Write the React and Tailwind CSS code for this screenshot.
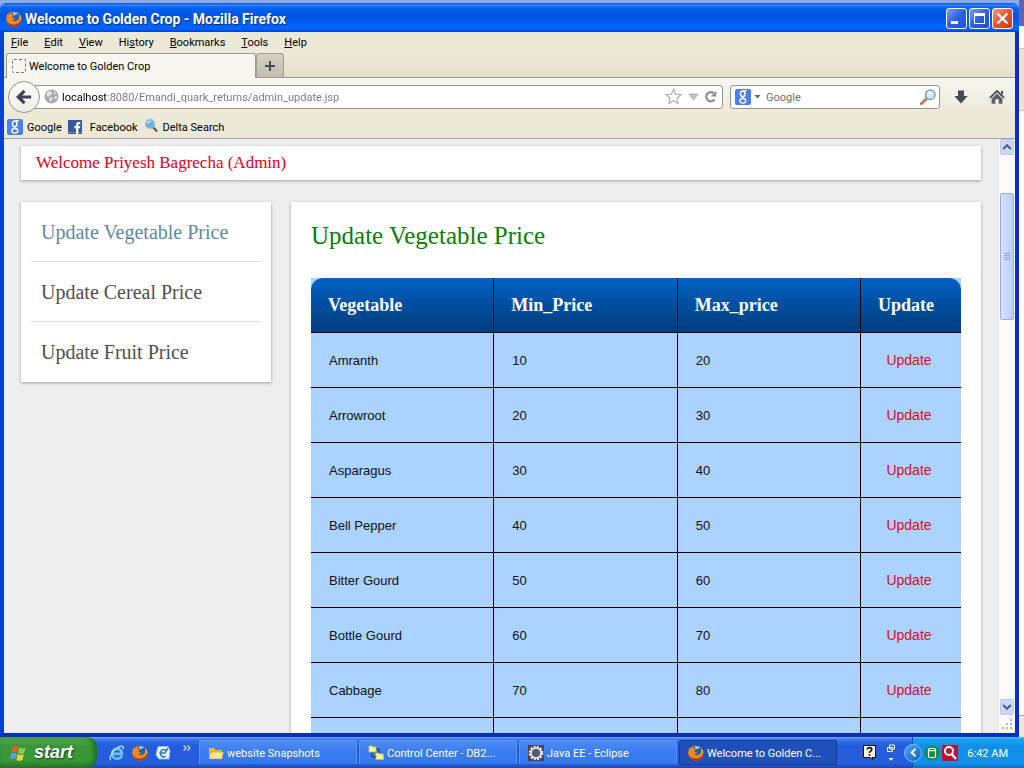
import React from "react";

const menus = [
  ["", "F", "ile"],
  ["", "E", "dit"],
  ["", "V", "iew"],
  ["Hi", "s", "tory"],
  ["", "B", "ookmarks"],
  ["", "T", "ools"],
  ["", "H", "elp"],
];

const rows = [
  ["Amranth", 10, 20],
  ["Arrowroot", 20, 30],
  ["Asparagus", 30, 40],
  ["Bell Pepper", 40, 50],
  ["Bitter Gourd", 50, 60],
  ["Bottle Gourd", 60, 70],
  ["Cabbage", 70, 80],
];

function FirefoxIcon() {
  return (
    <svg className="size-4 shrink-0" viewBox="0 0 16 16" aria-hidden="true">
      <circle cx="8" cy="8" r="7.6" fill="#d9540b" />
      <circle cx="8.6" cy="6" r="5.2" fill="#2460ae" />
      <path d="M6.500 1.800c2-1 5-.4 6.300 1.500-1.300-.4-2.600-.3-3.300.5s-2 .2-3-2z" fill="#9fd2f5" />
      <path d="M1.200 2.600c.4.700.9 1 1.500 1.100C3.300 2.500 4.300 1.600 5.500 1.100c-.3.800-.2 1.500.2 2.200.7.500 1.800.6 2.500.8-.1.900-1.200 1.200-1.700 1.700.2.500.1.900-.1 1.300.9-.1 2 .3 2.700.3-.5 1.300-2 1.500-2.900 1.200 1 2 4 2.200 5.700.5 1.300-1.300 1.500-3.200.9-5 1.400 1.200 2.300 3.100 2.100 5C14.600 13 11.700 15.600 8 15.600 3.900 15.600.4 12.400.4 8.200c0-1.800.3-3.500.8-5.600z" fill="#f08a1d" />
      <path d="M.7 9.500C2.200 12.500 5 13.700 8 13.600c3.300-.1 5.700-1.800 6.800-4.600.3 3.700-2.800 6.700-6.800 6.700-3.500 0-6.700-2.600-7.300-6.200z" fill="#b93208" />
      <path d="M13.400 3.200c1.300 1.600 1.900 3.600 1.300 5.600-.7-1.100-.9-3.300-1.300-5.600z" fill="#ffd34a" />
    </svg>
  );
}

function GoogleIcon() {
  return (
    <span aria-hidden="true" className="flex size-4 shrink-0 items-center justify-center rounded-[2px] bg-[#4a80ee]">
      <svg className="size-4" viewBox="0 0 16 16" fill="none" stroke="#fff">
        <ellipse cx="7.700" cy="4.800" rx="2.300" ry="2.900" strokeWidth="1.500" />
        <path d="M8.500 1.600h3.300M8.500 7.600c-1.500 1 .1 1.500 1.300 2.300" strokeWidth="1.200" />
        <ellipse cx="7.800" cy="11.800" rx="3" ry="2.300" strokeWidth="1.400" />
      </svg>
    </span>
  );
}

function Magnifier() {
  return (
    <svg className="size-4 shrink-0" viewBox="0 0 16 16" aria-hidden="true">
      <path d="M1.500 14.500 6.800 9.200" stroke="#b7703f" strokeWidth="3" strokeLinecap="round" />
      <path d="M1.200 14 6.300 8.900" stroke="#e9b48c" strokeWidth="1" />
      <circle cx="10.300" cy="5.700" r="4.700" fill="#cfe9fb" stroke="#7d9cc4" strokeWidth="1.500" />
      <path d="M7.600 5.200a3 3 0 0 1 2.700-2.300" stroke="#fff" strokeWidth="1.300" fill="none" />
    </svg>
  );
}

function Chevron({ down }) {
  return (
    <svg className="h-[8px] w-[10px]" viewBox="0 0 10 8" aria-hidden="true">
      <path d={down ? "M1.200 2 5 5.800 8.800 2" : "M1.200 6 5 2.200 8.800 6"} fill="none" stroke="#4d6185" strokeWidth="2.200" />
    </svg>
  );
}

function TitleBar() {
  return (
    <header className="flex h-[29px] shrink-0 items-center rounded-t-md bg-[linear-gradient(#0a50c8_0%,#2f86ff_7%,#0662f0_16%,#0053e0_45%,#0064fc_78%,#0060f4_92%,#0040c4_100%)] px-1.5 pt-[2px]">
      <FirefoxIcon />
      <h1 className="ml-[3px] flex-1 truncate pt-px font-[Roboto,sans-serif] text-[14px] font-bold leading-5 text-white [text-shadow:1px_1px_1px_#0a2a80]">
        Welcome to Golden Crop - Mozilla Firefox
      </h1>
      <div className="flex gap-[2px]">
        <button aria-label="Minimize" className="flex size-[21px] items-center justify-center rounded-[3px] border border-white bg-linear-to-br from-[#7d9cf0] via-[#2f60e0] to-[#1c50d8]">
          <svg className="size-[19px]" viewBox="0 0 19 19"><path d="M4 12h7v3H4z" fill="#fff" /></svg>
        </button>
        <button aria-label="Maximize" className="flex size-[21px] items-center justify-center rounded-[3px] border border-white bg-linear-to-br from-[#7d9cf0] via-[#2f60e0] to-[#1c50d8]">
          <svg className="size-[19px]" viewBox="0 0 19 19"><path d="M4 4h11v11H4zM5 7v7h9V7z" fill="#fff" fillRule="evenodd" /></svg>
        </button>
        <button aria-label="Close" className="flex size-[21px] items-center justify-center rounded-[3px] border border-white bg-linear-to-br from-[#f09a80] via-[#e25530] to-[#c83a12]">
          <svg className="size-[19px]" viewBox="0 0 19 19"><path d="m4.500 4.500 10 10m0-10-10 10" stroke="#fff" strokeWidth="2.200" /></svg>
        </button>
      </div>
    </header>
  );
}

function BrowserChrome() {
  return (
    <div className="shrink-0 bg-[#ece9d8] font-[Roboto,sans-serif] text-[11px] text-black">
      <nav aria-label="Menu" className="flex h-[21px] items-center gap-4 pl-[7px] pt-[2px]">
        {menus.map(([before, key, after]) => (
          <button key={before + key + after}>
            {before}<span className="underline">{key}</span>{after}
          </button>
        ))}
      </nav>
      <div className="flex h-[25px] items-stretch border-b border-[#9c9a8e] bg-linear-to-b from-[#ece9d8] to-[#e4e0ca] pl-[2px]">
        <button className="-mb-px flex w-[250px] items-center gap-[3px] rounded-t-[3px] border border-b-0 border-[#9c9a8e] bg-[#f7f6f0] pl-[5px]">
          <span className="size-[14px] rounded-[2px] border border-dashed border-[#77756c]" />
          <span className="pt-[3px]">Welcome to Golden Crop</span>
        </button>
        <button aria-label="New tab" className="flex w-[28px] items-center justify-center rounded-t-[3px] border border-b-0 border-[#a19f91] bg-linear-to-b from-[#d3d0c2] to-[#c1beae]">
          <svg className="size-3" viewBox="0 0 12 12"><path d="M1 6h10M6 1v10" stroke="#454c55" strokeWidth="2" /></svg>
        </button>
      </div>
      <div className="flex h-[37px] items-center bg-linear-to-b from-[#f7f6f0] to-[#ece9d8] pl-1 pr-[10px]">
        <button aria-label="Back" className="z-10 flex size-8 shrink-0 items-center justify-center rounded-full border border-[#98968c] bg-linear-to-b from-white to-[#eeece2]">
          <svg className="size-4" viewBox="0 0 18 18"><path d="M9.500 2 2.500 9l7 7M3 9h14" fill="none" stroke="#3c444f" strokeWidth="3.600" /></svg>
        </button>
        <div className="-ml-2 flex h-6 flex-1 items-center rounded-r-[3px] border border-[#98968c] bg-white pl-[11px] pr-[5px]">
          <svg className="size-[15px] shrink-0" viewBox="0 0 15 15" aria-hidden="true">
            <circle cx="7.500" cy="7.500" r="7" fill="#a9a9a9" />
            <path d="M2.500 4.500c1-2 3-3 4.500-2.800l-.3 1.600 1.800.8-1 2-2.300.2-.8 1.500-1.500-.8zM9.500 2l3 2.300-1.800 1.200zM5.500 8l3 .8.5 1.500-1.800 1-.4 2-1.400-1.600zM10.500 7l2.700.4-1 3-1.800-1z" fill="#e6e6e6" />
          </svg>
          <input
            aria-label="Address"
            defaultValue="localhost:8080/Emandi_quark_returns/admin_update.jsp"
            className="ml-[3px] min-w-0 flex-1 bg-[linear-gradient(90deg,#000_44px,#777_44px)] bg-clip-text pt-[3px] text-transparent outline-none"
          />
          <button aria-label="Bookmark this page">
            <svg className="size-[17px]" viewBox="0 0 17 17"><path d="m8.500 1.200 2.100 5 5.400.5-4.100 3.500 1.200 5.300-4.600-2.800-4.600 2.800 1.200-5.300L1 6.700l5.400-.5z" fill="#fff" stroke="#b0b0b0" strokeWidth="1.200" /></svg>
          </button>
          <button aria-label="Show history" className="ml-[6px]">
            <svg className="h-[8px] w-[11px]" viewBox="0 0 11 8"><path d="M.8 1h9.400L5.500 7.200z" fill="#c4c4c4" stroke="#aaa" strokeWidth=".8" /></svg>
          </button>
          <button aria-label="Reload" className="ml-[5px]">
            <svg className="size-[13px]" viewBox="0 0 13 13"><path d="M10.500 9.500A4.600 4.600 0 1 1 9.800 3.200" fill="none" stroke="#8a8d91" strokeWidth="2.200" /><path d="M12.300.8v5.700H6.800z" fill="#8a8d91" /></svg>
          </button>
        </div>
        <div className="ml-[7px] flex h-6 w-[210px] items-center rounded-[3px] border border-[#98968c] bg-white pl-1 pr-[3px]">
          <GoogleIcon />
          <button aria-label="Choose search engine" className="ml-[3px]">
            <svg className="h-1 w-[7px]" viewBox="0 0 7 4"><path d="M.5 0h6l-3 3.600z" fill="#666" /></svg>
          </button>
          <input aria-label="Search" placeholder="Google" className="ml-[5px] min-w-0 flex-1 pt-[3px] outline-none placeholder:text-[#6f6f6f]" />
          <button aria-label="Go"><Magnifier /></button>
        </div>
        <button aria-label="Downloads" className="ml-[14px]">
          <svg className="size-[14px]" viewBox="0 0 14 14"><path d="M4 .5h6V6h3.700L7 13.500.3 6H4z" fill="#434b55" /></svg>
        </button>
        <button aria-label="Home" className="ml-[21px]">
          <svg className="size-4" viewBox="0 0 16 16"><path d="m8 .8 7.700 7.500-1.200 1.200L8 3.200 1.500 9.500.3 8.300zM12 2h2v4l-2-2z" fill="#434b55" /><path d="m8 4.500 5.400 5.200v5.100H9.700v-4.600H6.300v4.600H2.600V9.700z" fill="#59616a" /></svg>
        </button>
      </div>
      <nav aria-label="Bookmarks" className="flex h-6 items-center border-b border-[#a5a397] pl-[3px]">
        <a href="#google" className="flex items-center gap-1"><GoogleIcon /><span className="pt-[3px]">Google</span></a>
        <a href="#facebook" className="ml-[6px] flex items-center gap-2">
          <svg className="size-[14px]" viewBox="0 0 14 14" aria-hidden="true"><path d="M0 0h14v14H0z" fill="#3b5998" /><path d="M0 12h14v1H0z" fill="#7188b7" /><path d="M8 14V8.200H6.400V6H8V4.700C8 2.900 9 2 10.700 2h1.600v2.200h-1c-.8 0-1 .3-1 1V6h2l-.3 2.200h-1.700V14z" fill="#fff" /></svg>
          <span className="pt-[3px]">Facebook</span>
        </a>
        <a href="#delta" className="ml-[6px] flex items-center gap-[3px]">
          <svg className="size-4" viewBox="0 0 16 16" aria-hidden="true"><path d="m9 8 4 4.500" stroke="#6c5a4c" strokeWidth="2.400" /><circle cx="6" cy="5" r="4.500" fill="#65b4f2" stroke="#a9bccd" strokeWidth="1.200" /><path d="M3.500 4.500A3 3 0 0 1 7 2.500" stroke="#d8f0ff" strokeWidth="1.300" fill="none" /></svg>
          <span className="pt-[3px]">Delta Search</span>
        </a>
      </nav>
    </div>
  );
}

function SideLink({ href, active, last, children }) {
  return (
    <li className={last ? "" : "border-b border-[#dedede]"}>
      <a href={href} className={"flex h-[59px] items-center px-[10px] text-[20px] " + (active ? "text-[#5f88a3]" : "text-[#4f4f4f]")}>
        {children}
      </a>
    </li>
  );
}

function Page() {
  return (
    <main className="min-w-0 flex-1 overflow-hidden bg-[#eeeeee] pl-[17px] pr-[18px] pt-[7px] font-['Liberation_Serif',serif]">
      <p className="flex h-[34px] items-center bg-white px-[15px] text-[17px] text-[#e00018] shadow-[0_1px_3px_rgba(0,0,0,0.35)]">
        Welcome Priyesh Bagrecha (Admin)
      </p>
      <div className="mt-[22px] flex items-start gap-5">
        <ul className="w-[250px] shrink-0 bg-white px-[10px] pb-px shadow-[0_1px_3px_rgba(0,0,0,0.35)]">
          <SideLink href="#vegetable" active>Update Vegetable Price</SideLink>
          <SideLink href="#cereal">Update Cereal Price</SideLink>
          <SideLink href="#fruit" last>Update Fruit Price</SideLink>
        </ul>
        <section className="min-w-0 flex-1 bg-white px-5 pb-5 pt-4 shadow-[0_1px_3px_rgba(0,0,0,0.35)]">
          <h2 className="mb-6 text-[25px] leading-9 text-[#087d08]">Update Vegetable Price</h2>
          <table className="w-full table-fixed border-separate border-spacing-0 bg-[#aad4ff] text-left font-['Liberation_Sans',sans-serif] text-[13px] text-[#101020]">
            <colgroup>
              <col />
              <col />
              <col />
              <col className="w-[100px]" />
            </colgroup>
            <thead className="font-['Liberation_Serif',serif] text-[18px] text-white">
              <tr className="h-[55px]">
                <th className="rounded-tl-xl border-b border-r border-black bg-linear-to-b from-[#0062c4] to-[#003c7c] px-[17px]">Vegetable</th>
                <th className="border-b border-r border-black bg-linear-to-b from-[#0062c4] to-[#003c7c] px-[17px]">Min_Price</th>
                <th className="border-b border-r border-black bg-linear-to-b from-[#0062c4] to-[#003c7c] px-[17px]">Max_price</th>
                <th className="rounded-tr-xl border-b border-black bg-linear-to-b from-[#0062c4] to-[#003c7c] px-[17px]">Update</th>
              </tr>
            </thead>
            <tbody>
              {rows.map(([name, min, max]) => (
                <tr key={name} className="h-[55px]">
                  <td className="border-b border-r border-black px-[18px] pt-[2px]">{name}</td>
                  <td className="border-b border-r border-black px-[18px] pt-[2px]">{min}</td>
                  <td className="border-b border-r border-black px-[18px] pt-[2px]">{max}</td>
                  <td className="border-b border-black pr-1 text-center text-[14px]">
                    <a href="#update" className="text-[#e00828]">Update</a>
                  </td>
                </tr>
              ))}
              <tr className="h-[55px]">
                <td className="border-b border-r border-black" />
                <td className="border-b border-r border-black" />
                <td className="border-b border-r border-black" />
                <td className="border-b border-black" />
              </tr>
            </tbody>
          </table>
        </section>
      </div>
    </main>
  );
}

function ScrollBar() {
  return (
    <div className="flex w-4 shrink-0 flex-col items-center bg-[#fbfaf6]">
      <button aria-label="Scroll up" className="flex h-4 w-[14px] items-center justify-center rounded-[2px] border border-[#b7c8f0] bg-[#c9d8fb]"><Chevron /></button>
      <div className="flex w-full flex-1 flex-col items-center pt-[38px]">
        <div className="flex h-1/4 w-[14px] flex-col items-center justify-center gap-px rounded-[2px] border border-[#98b0e8] bg-linear-to-r from-[#d6e3ff] to-[#b9cdfa]">
          <span className="h-px w-[6px] bg-[#8ba6dc]" />
          <span className="h-px w-[6px] bg-[#8ba6dc]" />
          <span className="h-px w-[6px] bg-[#8ba6dc]" />
          <span className="h-px w-[6px] bg-[#8ba6dc]" />
        </div>
      </div>
      <button aria-label="Scroll down" className="flex h-4 w-[14px] items-center justify-center rounded-[2px] border border-[#b7c8f0] bg-[#c9d8fb]"><Chevron down /></button>
      <svg className="my-[2px] size-[14px]" viewBox="0 0 14 14" aria-hidden="true">
        <path d="M10 2h2v2h-2zM6 6h2v2H6zM10 6h2v2h-2zM2 10h2v2H2zM6 10h2v2H6zM10 10h2v2h-2z" fill="#bdb8a5" />
      </svg>
    </div>
  );
}

function Task({ icon, active, children }) {
  return (
    <button
      className={
        "flex h-[25px] w-[158px] min-w-0 items-center gap-[3px] rounded-[2px] border pl-2 " +
        (active
          ? "border-[#163c92] bg-[#1e50b8]"
          : "border-[#5b93f5] border-b-[#2960d0] bg-linear-to-b from-[#4c8cf8] via-[#3a7cf0] to-[#3577ee]")
      }
    >
      {icon}
      <span className="truncate pt-[3px]">{children}</span>
    </button>
  );
}

function TaskBar() {
  return (
    <footer className="flex h-[31px] shrink-0 items-center bg-[linear-gradient(#7da8f2_0%,#3f7fee_6%,#2f6ce6_14%,#245ddb_30%,#245edc_85%,#1c48b0_100%)] font-[Roboto,sans-serif] text-[11px] text-white">
      <button className="flex h-full w-[97px] shrink-0 items-center gap-[6px] rounded-r-[10px] bg-[linear-gradient(#6fb86f_0%,#4ba34b_10%,#3a963a_30%,#389838_75%,#2a752c_100%)] pl-[10px] font-['Liberation_Sans',sans-serif] text-[18px] font-bold italic shadow-[inset_-3px_0_5px_#1f6a22] [text-shadow:1px_1px_2px_#1c3c1c]">
        <svg className="size-[18px]" viewBox="0 0 18 18" aria-hidden="true">
          <path d="M3 2.500C5 1.300 6.700 1.500 8.300 2.600L7 8.500C5.400 7.500 3.600 7.300 1.600 8.300z" fill="#ef5a2a" />
          <path d="M9.300 3.200c2 1.100 4.100 1.300 6.200.2l-1.400 5.800c-2 1.100-4.100.9-6-.2z" fill="#7ed04a" />
          <path d="M1.300 9.400c2-1 3.800-.8 5.400.2l-1.400 5.700C3.700 14.300 2 14.200 0 15.200z" fill="#5b9bf5" />
          <path d="M7.800 10.100c2 1.100 4 1.300 6 .2l-1.400 5.800c-2 1.100-4 .9-6-.2z" fill="#fcd13e" />
        </svg>
        start
      </button>
      <div className="ml-3 flex items-center gap-[7px]">
        <button aria-label="Internet Explorer">
          <svg className="size-4" viewBox="0 0 16 16"><path d="M12.800 10.700c-.7 1.800-2.500 3-4.700 3-2.900 0-5-2-5-4.900s2.100-4.900 5-4.900 5 2 4.900 5H4.500" fill="none" stroke="#6cc3f8" strokeWidth="2.600" /><path d="M2 15C-.5 13 4 4 11 1.500c2.800-1 3.900.2 3 2.700" fill="none" stroke="#a8ddfb" strokeWidth="1.400" /></svg>
        </button>
        <button aria-label="Firefox"><FirefoxIcon /></button>
        <button aria-label="Show desktop">
          <svg className="size-4" viewBox="0 0 16 16"><path d="M3 1.500h10l2 4-1 8.500H4L1 10z" fill="#eef6fd" stroke="#8fbce6" /><path d="M11 5.500A3.500 3.500 0 1 0 11 11M5 8h5l3-5" fill="none" stroke="#3679b7" strokeWidth="1.500" /></svg>
        </button>
      </div>
      <button aria-label="More quick launch items" className="mb-[10px] ml-[12px]">
        <svg className="h-[6px] w-[8px]" viewBox="0 0 8 6"><path d="m.7.500 2.500 2.500L.7 5.500M4.500.5 7 3 4.500 5.500" fill="none" stroke="#d6e6ff" strokeWidth="1.100" /></svg>
      </button>
      <div className="ml-2 flex min-w-0 flex-1 gap-[2px]">
        <Task icon={
          <svg className="size-4 shrink-0" viewBox="0 0 16 16" aria-hidden="true"><path d="M1 3h5l1.500 2H14v9H1z" fill="#e9b93a" /><path d="M3 7h12.500L14 14H1z" fill="#fde98e" stroke="#c89422" strokeWidth=".7" /></svg>
        }>website Snapshots</Task>
        <Task icon={
          <svg className="size-4 shrink-0" viewBox="0 0 16 16" aria-hidden="true"><path d="M4 6v6h5M6 4h5v5" fill="none" stroke="#1e2c4d" /><path d="M1 1h3l1 1h3v5H1zM8 8h3l1 1h3.500v5.500H8z" fill="#fbf3a0" stroke="#c9b64a" strokeWidth=".8" /></svg>
        }>Control Center - DB2...</Task>
        <Task icon={
          <svg className="size-4 shrink-0" viewBox="0 0 16 16" aria-hidden="true"><path d="M0 0h16v16H0z" fill="#4c4350" /><circle cx="8" cy="8" r="6.300" fill="none" stroke="#f2f2f2" strokeWidth="2" strokeDasharray="2 1.300" /><circle cx="8" cy="8" r="5" fill="#5b5a73" stroke="#f2f2f2" strokeWidth="1.400" /></svg>
        }>Java EE - Eclipse</Task>
        <Task active icon={<FirefoxIcon />}>Welcome to Golden C...</Task>
      </div>
      <button aria-label="Help">
        <svg className="h-[15px] w-[13px]" viewBox="0 0 13 15"><path d="M.5.500h12v12H9l1 2-3-2H.5z" fill="#fffbe0" stroke="#111" /><path d="M4.200 4.500C4.200 2 8.800 2 8.800 4.500c0 1.700-2.300 1.600-2.300 3.500M6.500 9.300V11" fill="none" stroke="#111" strokeWidth="1.700" /></svg>
      </button>
      <button aria-label="Language bar options" className="ml-[11px] mr-[17px]">
        <svg className="h-[18px] w-[8px]" viewBox="0 0 8 18"><path d="M2.500 1h5v4h-5zM.5 3.500h5v4h-5z" fill="#2a62da" stroke="#fff" /><path d="M1.500 14h5L4 16.800z" fill="#fff" /></svg>
      </button>
      <div className="flex h-full shrink-0 items-center border-l border-[#0f4fa8] bg-[linear-gradient(#4cc0fa_0%,#1aa0f2_8%,#118fe8_30%,#1290ea_85%,#0d6fbd_100%)] pr-4">
        <button aria-label="Show hidden icons" className="-ml-[9px] flex size-[18px] items-center justify-center rounded-full border border-[#7cc0f8] bg-linear-to-br from-[#4ba5f5] to-[#0d5fc8]">
          <svg className="size-[9px]" viewBox="0 0 9 9"><path d="M6.500.800 2.800 4.500l3.700 3.700" fill="none" stroke="#fff" strokeWidth="2" /></svg>
        </button>
        <svg className="ml-[2px] size-4" viewBox="0 0 16 16" aria-hidden="true"><circle cx="8" cy="8" r="7.600" fill="#148a4a" /><path d="M4.500 4.500v7c0 1.500 7 1.500 7 0v-7" fill="none" stroke="#fff" strokeWidth="1.200" /><ellipse cx="8" cy="4.500" rx="3.500" ry="1.300" fill="none" stroke="#fff" strokeWidth="1.100" /></svg>
        <svg className="ml-[2px] size-4" viewBox="0 0 16 16" aria-hidden="true"><path d="M0 0h16v16H0z" fill="#c4102c" /><circle cx="7" cy="6" r="4" fill="none" stroke="#fff" strokeWidth="2" /><path d="m9.500 9 4.500 5" stroke="#fff" strokeWidth="2.500" /></svg>
        <time className="ml-[9px] pt-[3px]">6:42 AM</time>
      </div>
    </footer>
  );
}

export default function App() {
  return (
    <div className="flex h-screen flex-col overflow-hidden bg-[#8caae8]">
      <div className="flex min-h-0 flex-1">
        <div className="flex min-w-0 flex-1 flex-col pt-[3px]">
          <TitleBar />
          <div className="flex min-h-0 flex-1 flex-col border-x-4 border-b-4 border-[#0a3fd6] border-b-[#0a30b8] border-r-[#0a2fc0]">
            <BrowserChrome />
            <div className="flex min-h-0 flex-1">
              <Page />
              <ScrollBar />
            </div>
          </div>
        </div>
        <div aria-hidden="true" className="flex w-[5px] shrink-0 flex-col bg-white">
          <div className="h-[26px] bg-[#5c62b8]" />
          <div className="mt-[22px] h-[63px] border-y border-[#cbc7b0] bg-[#ece4cc]" />
          <div className="mt-auto h-[22px] border-t border-[#aca899] bg-[#ece9d8]" />
        </div>
      </div>
      <TaskBar />
    </div>
  );
}
